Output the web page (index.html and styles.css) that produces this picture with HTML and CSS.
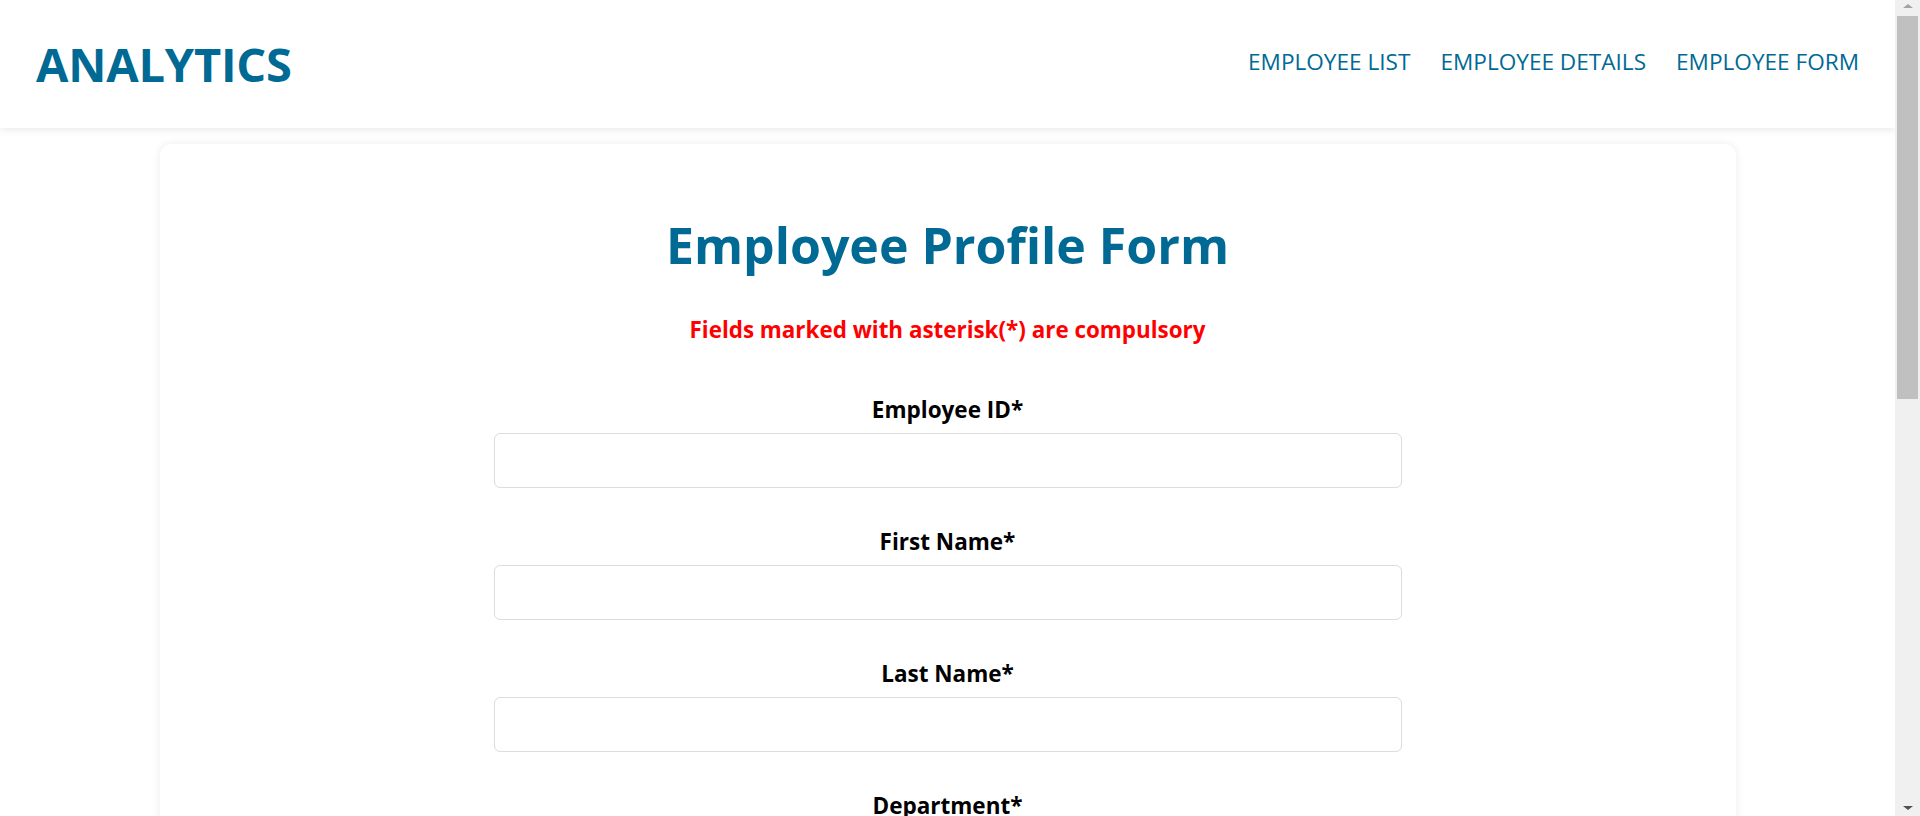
FILE: index.html
```html
<!DOCTYPE html>
<html lang="en">
<head>
<meta charset="utf-8">
<title>Employee Profile Form</title>
<link rel="stylesheet" href="styles.css">
</head>
<body>
<div class="page">
  <header class="topbar">
    <div class="logo">ANALYTICS</div>
    <nav class="nav">
      <a class="nav-link" href="#">EMPLOYEE LIST</a>
      <a class="nav-link" href="#">EMPLOYEE DETAILS</a>
      <a class="nav-link" href="#">EMPLOYEE FORM</a>
    </nav>
  </header>
  <main class="card">
    <h1 class="title">Employee Profile Form</h1>
    <p class="note">Fields marked with asterisk(*) are compulsory</p>
    <form class="form">
      <div class="field">
        <label class="label" for="eid">Employee ID*</label>
        <input class="input" id="eid" type="text">
      </div>
      <div class="field">
        <label class="label" for="fname">First Name*</label>
        <input class="input" id="fname" type="text">
      </div>
      <div class="field">
        <label class="label" for="lname">Last Name*</label>
        <input class="input" id="lname" type="text">
      </div>
      <div class="field">
        <label class="label" for="dept">Department*</label>
        <input class="input" id="dept" type="text">
      </div>
      <div class="field">
        <label class="label" for="desig">Designation*</label>
        <input class="input" id="desig" type="text">
      </div>
      <div class="field">
        <label class="label" for="email">Email*</label>
        <input class="input" id="email" type="text">
      </div>
      <div class="field">
        <label class="label" for="phone">Phone Number</label>
        <input class="input" id="phone" type="text">
      </div>
      <button class="submit" type="button">Submit</button>
    </form>
  </main>
</div>
<div class="scrollbar" aria-hidden="true">
  <span class="arrow arrow-up"></span>
  <span class="thumb"></span>
  <span class="track-rest"></span>
  <span class="arrow arrow-down"></span>
</div>
</body>
</html>
```

FILE: styles.css
```css
html {
  background: #ffffff;
}
body {
  margin: 0;
  height: 100vh;
  overflow: hidden;
  display: flex;
  font-family: "Open Sans", "Noto Sans", sans-serif;
  color: #000;
  background: #fff;
}
.page {
  flex: 1;
  min-width: 0;
  height: 100vh;
  overflow: hidden;
}
.scrollbar {
  flex: none;
  width: 25px;
  height: 100vh;
  background: #f0f0f0;
  display: flex;
  flex-direction: column;
  align-items: center;
  box-sizing: border-box;
  padding: 4px 0 6px;
}
.arrow {
  width: 0;
  height: 0;
  border-left: 5px solid transparent;
  border-right: 5px solid transparent;
}
.arrow-up {
  border-bottom: 4px solid #a3a3a3;
}
.arrow-down {
  border-top: 4px solid #505050;
}
.thumb {
  margin-top: 8px;
  width: 21px;
  height: 383px;
  background: #c0c0c0;
}
.track-rest {
  flex: 1;
}
.topbar {
  height: 128px;
  display: flex;
  align-items: center;
  justify-content: space-between;
  padding: 0 36px;
  background: #fff;
  box-shadow: 0 2px 8px rgba(0, 0, 0, 0.09);
  position: relative;
  z-index: 1;
}
.logo {
  font-size: 47px;
  font-weight: 700;
  color: #006994;
  line-height: 60px;
  letter-spacing: -0.2px;
}
.nav {
  display: flex;
  gap: 30px;
  margin-top: -4px;
}
.nav-link {
  font-size: 22.6px;
  color: #006994;
  text-decoration: none;
  line-height: 30px;
}
.card {
  width: 1576px;
  margin: 16px auto 60px;
  background: #fff;
  border-radius: 12px;
  box-shadow: 0 0 10px rgba(0, 0, 0, 0.08);
  padding: 71px 0 80px;
  box-sizing: border-box;
  display: flex;
  flex-direction: column;
  align-items: center;
}
.title {
  margin: 0;
  font-size: 50px;
  line-height: 60px;
  font-weight: 700;
  color: #006994;
}
.note {
  margin: 40px 0 0;
  font-size: 22.4px;
  line-height: 30px;
  font-weight: 700;
  color: #ff0000;
}
.form {
  margin-top: 50px;
  display: flex;
  flex-direction: column;
  align-items: center;
  gap: 39px;
}
.field {
  display: flex;
  flex-direction: column;
  align-items: center;
  gap: 8px;
}
.label {
  font-size: 22.5px;
  line-height: 30px;
  font-weight: 700;
}
.input {
  width: 908px;
  height: 55px;
  box-sizing: border-box;
  border: 1px solid #dcdcdc;
  border-radius: 6px;
  background: #fff;
  font: inherit;
  padding: 0 12px;
}
.submit {
  margin-top: 10px;
  padding: 12px 40px;
  font: inherit;
  font-size: 22px;
  font-weight: 700;
  color: #fff;
  background: #006994;
  border: none;
  border-radius: 6px;
}
```
